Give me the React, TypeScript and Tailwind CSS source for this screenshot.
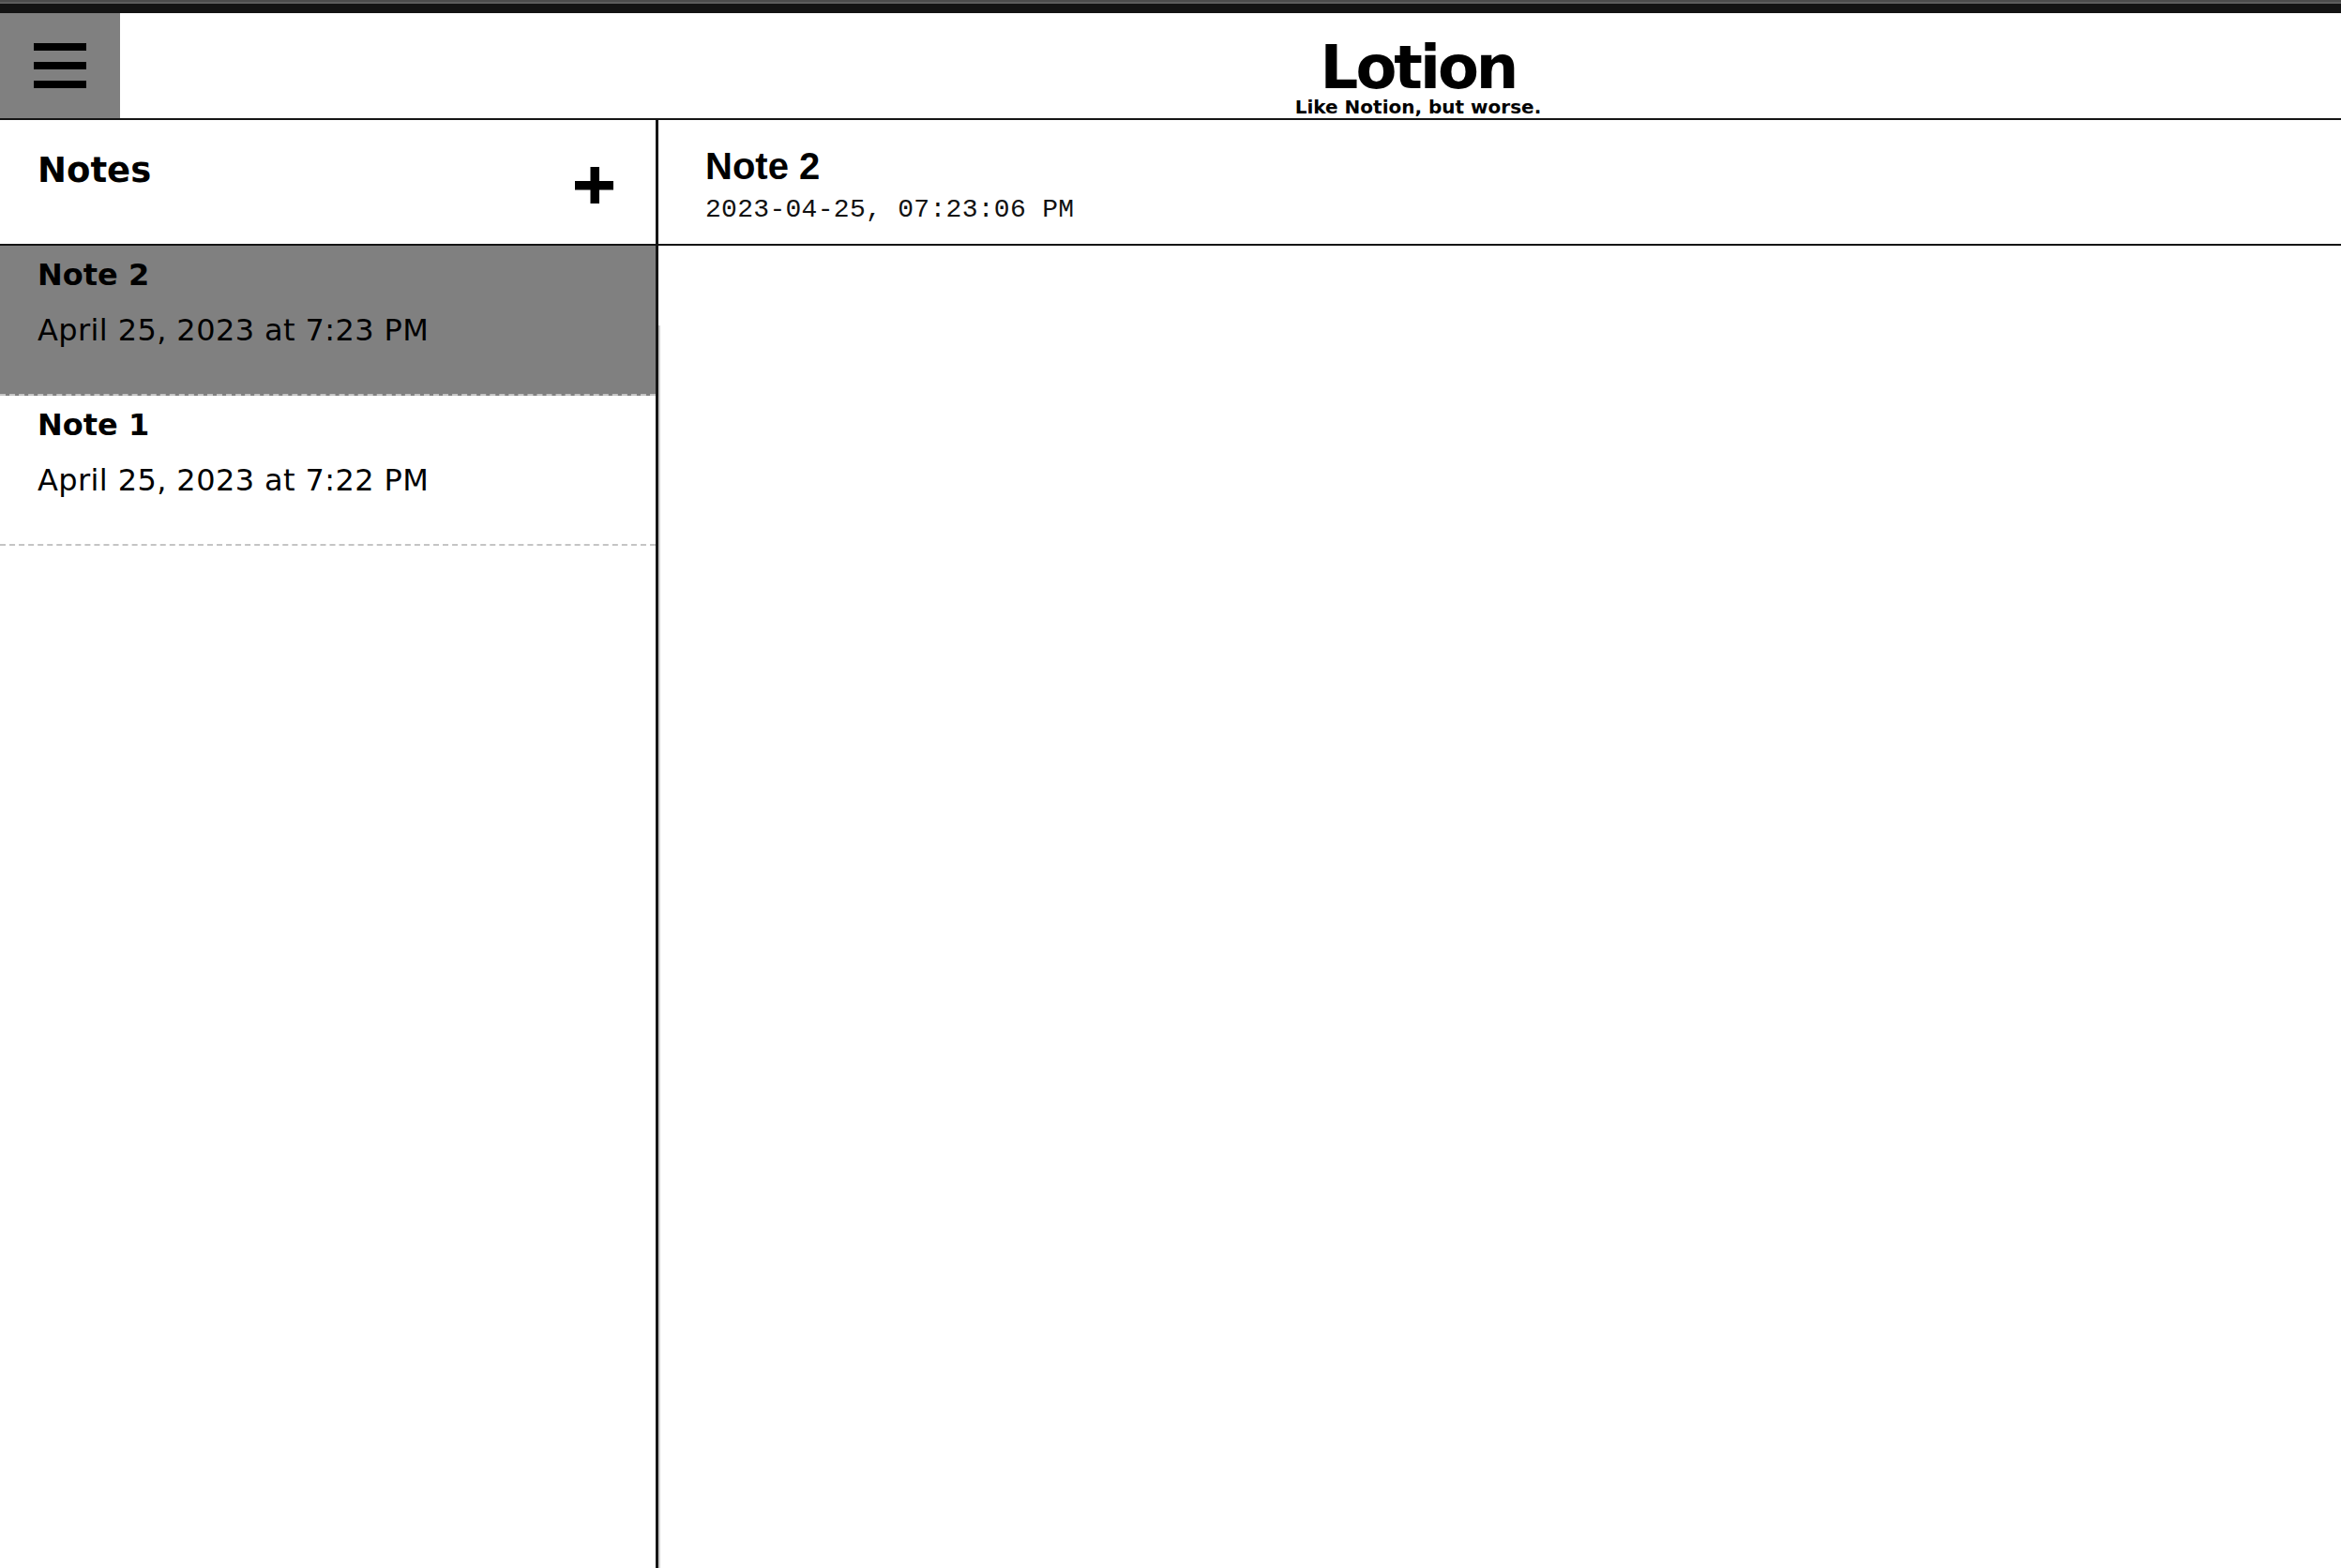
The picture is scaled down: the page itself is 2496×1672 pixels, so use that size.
export default function App() {
  const notes = [
    { title: "Note 2", date: "April 25, 2023 at 7:23 PM", active: true },
    { title: "Note 1", date: "April 25, 2023 at 7:22 PM", active: false },
  ];
  return (
    <div className="flex h-screen w-full flex-col bg-white font-['DejaVu_Sans',Verdana,sans-serif] text-black">
      <div className="h-[2px] bg-[#4c4c4c]" />
      <div className="h-[2px] bg-[#5e5e5e]" />
      <div className="h-[10px] bg-[#141414]" />
      <header className="flex h-[114px] border-b-2 border-[#151515]">
        <button className="flex w-[128px] flex-col items-center justify-center gap-[12px] bg-[#808080]">
          <span className="block h-[8px] w-[56px] bg-black" />
          <span className="block h-[8px] w-[56px] bg-black" />
          <span className="block h-[8px] w-[56px] bg-black" />
        </button>
        <div className="flex flex-1 flex-col items-center pl-[400px] pt-[30px]">
          <h1 className="text-[64px] font-bold leading-[56px] tracking-[-3px]">Lotion</h1>
          <p className="mt-[4px] text-[20px] font-bold leading-[20px]">Like Notion, but worse.</p>
        </div>
      </header>
      <div className="flex min-h-0 flex-1">
        <aside className="flex w-[702px] flex-col border-r-[3px] border-[#151515]">
          <div className="flex h-[134px] justify-between border-b-2 border-[#151515] pl-[40px] pr-[45px]">
            <h2 className="pt-[36px] text-[37px] font-bold leading-[36px]">Notes</h2>
            <svg className="mt-[50px]" width="41" height="39" viewBox="0 0 41 39">
              <rect x="0" y="15" width="41" height="9.5" fill="#000" />
              <rect x="16.5" y="0" width="9.5" height="39" fill="#000" />
            </svg>
          </div>
          {notes.map((n) => (
            <div
              key={n.title}
              className={`h-[160px] border-b-2 border-dashed border-[#c4c4c4] pl-[40px] pt-[13px] ${n.active ? "bg-[#808080]" : "bg-white"}`}
            >
              <div className="text-[32px] font-bold leading-[37px]">{n.title}</div>
              <div className="mt-[22px] text-[32px] leading-[37px] tracking-[0.4px]">{n.date}</div>
            </div>
          ))}
        </aside>
        <main className="flex flex-1 flex-col">
          <div className="h-[134px] border-b-2 border-[#151515] pl-[50px] pt-[29px] font-['Liberation_Sans',Arial,sans-serif]">
            <div className="text-[40px] font-bold leading-[40px]">Note 2</div>
            <div className="mt-[13px] font-['Liberation_Mono','Courier_New',monospace] text-[28px] leading-[28px] tracking-[0.3px] text-[#111]">
              2023-04-25, 07:23:06 PM
            </div>
          </div>
          <div className="mt-[85px] flex-1 border-l-2 border-[#d0d0d0]" />
        </main>
      </div>
    </div>
  );
}
